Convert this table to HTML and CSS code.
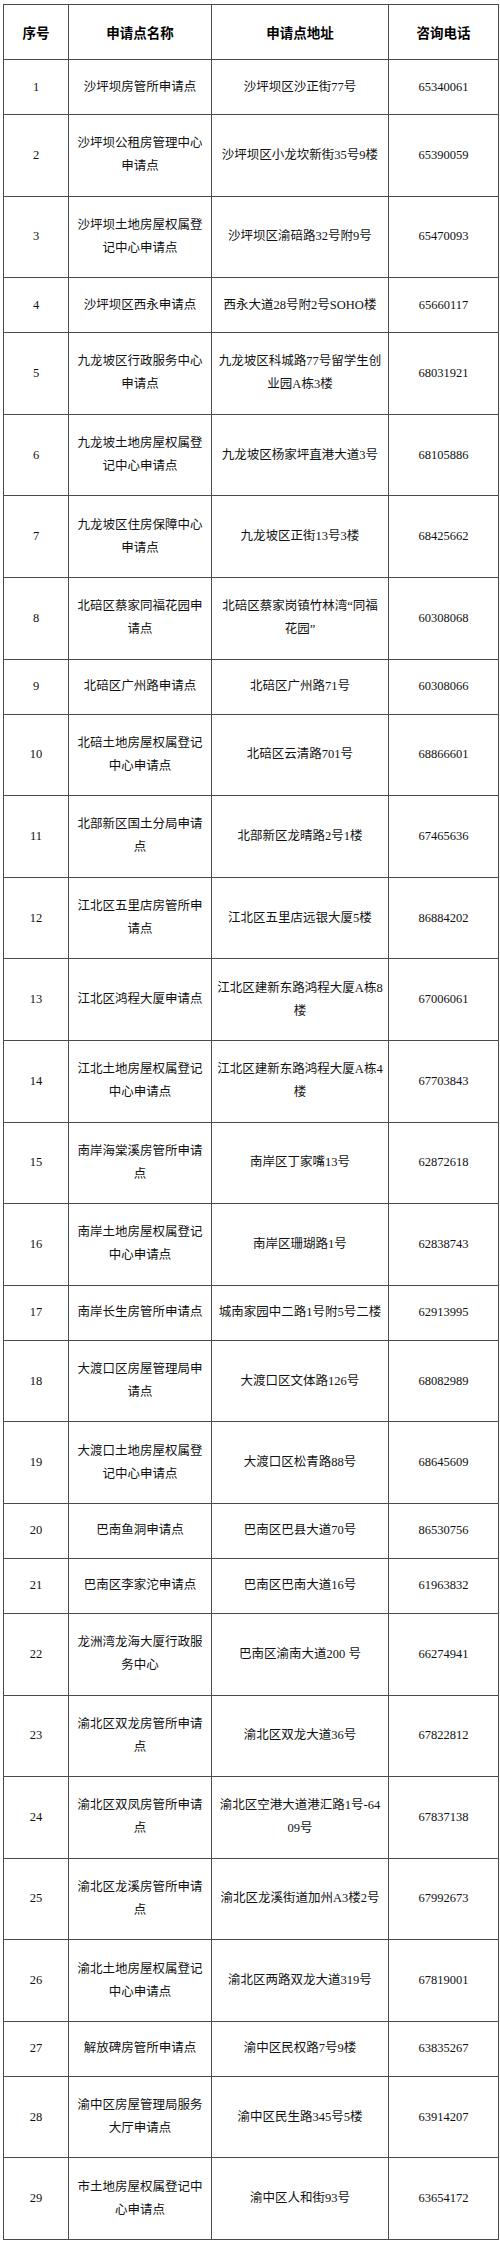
FILE: index.html
```html
<!DOCTYPE html>
<html lang="zh-CN">
<head>
<meta charset="utf-8">
<title>申请点列表</title>
<link rel="stylesheet" href="styles.css">
</head>
<body>
<div class="wrap">
<table class="list">
  <colgroup>
    <col class="c-no">
    <col class="c-name">
    <col class="c-addr">
    <col class="c-tel">
  </colgroup>
  <thead>
    <tr class="one"><th>序号</th><th>申请点名称</th><th>申请点地址</th><th>咨询电话</th></tr>
  </thead>
  <tbody>
    <tr class="one"><td>1</td><td>沙坪坝房管所申请点</td><td>沙坪坝区沙正街77号</td><td>65340061</td></tr>
    <tr class="two"><td>2</td><td>沙坪坝公租房管理中心申请点</td><td>沙坪坝区小龙坎新街35号9楼</td><td>65390059</td></tr>
    <tr class="two"><td>3</td><td>沙坪坝土地房屋权属登记中心申请点</td><td>沙坪坝区渝碚路32号附9号</td><td>65470093</td></tr>
    <tr class="one"><td>4</td><td>沙坪坝区西永申请点</td><td>西永大道28号附2号SOHO楼</td><td>65660117</td></tr>
    <tr class="two"><td>5</td><td>九龙坡区行政服务中心申请点</td><td>九龙坡区科城路77号留学生创业园A栋3楼</td><td>68031921</td></tr>
    <tr class="two"><td>6</td><td>九龙坡土地房屋权属登记中心申请点</td><td>九龙坡区杨家坪直港大道3号</td><td>68105886</td></tr>
    <tr class="two"><td>7</td><td>九龙坡区住房保障中心申请点</td><td>九龙坡区正街13号3楼</td><td>68425662</td></tr>
    <tr class="two"><td>8</td><td>北碚区蔡家同福花园申请点</td><td>北碚区蔡家岗镇竹林湾“同福花园”</td><td>60308068</td></tr>
    <tr class="one"><td>9</td><td>北碚区广州路申请点</td><td>北碚区广州路71号</td><td>60308066</td></tr>
    <tr class="two"><td>10</td><td>北碚土地房屋权属登记中心申请点</td><td>北碚区云清路701号</td><td>68866601</td></tr>
    <tr class="two"><td>11</td><td>北部新区国土分局申请点</td><td>北部新区龙晴路2号1楼</td><td>67465636</td></tr>
    <tr class="two"><td>12</td><td>江北区五里店房管所申请点</td><td>江北区五里店远银大厦5楼</td><td>86884202</td></tr>
    <tr class="two"><td>13</td><td>江北区鸿程大厦申请点</td><td>江北区建新东路鸿程大厦A栋8楼</td><td>67006061</td></tr>
    <tr class="two"><td>14</td><td>江北土地房屋权属登记中心申请点</td><td>江北区建新东路鸿程大厦A栋4楼</td><td>67703843</td></tr>
    <tr class="two"><td>15</td><td>南岸海棠溪房管所申请点</td><td>南岸区丁家嘴13号</td><td>62872618</td></tr>
    <tr class="two"><td>16</td><td>南岸土地房屋权属登记中心申请点</td><td>南岸区珊瑚路1号</td><td>62838743</td></tr>
    <tr class="one"><td>17</td><td>南岸长生房管所申请点</td><td>城南家园中二路1号附5号二楼</td><td>62913995</td></tr>
    <tr class="two"><td>18</td><td>大渡口区房屋管理局申请点</td><td>大渡口区文体路126号</td><td>68082989</td></tr>
    <tr class="two"><td>19</td><td>大渡口土地房屋权属登记中心申请点</td><td>大渡口区松青路88号</td><td>68645609</td></tr>
    <tr class="one"><td>20</td><td>巴南鱼洞申请点</td><td>巴南区巴县大道70号</td><td>86530756</td></tr>
    <tr class="one"><td>21</td><td>巴南区李家沱申请点</td><td>巴南区巴南大道16号</td><td>61963832</td></tr>
    <tr class="two"><td>22</td><td>龙洲湾龙海大厦行政服务中心</td><td>巴南区渝南大道200 号</td><td>66274941</td></tr>
    <tr class="two"><td>23</td><td>渝北区双龙房管所申请点</td><td>渝北区双龙大道36号</td><td>67822812</td></tr>
    <tr class="two"><td>24</td><td>渝北区双凤房管所申请点</td><td>渝北区空港大道港汇路1号-6409号</td><td>67837138</td></tr>
    <tr class="two"><td>25</td><td>渝北区龙溪房管所申请点</td><td>渝北区龙溪街道加州A3楼2号</td><td>67992673</td></tr>
    <tr class="two"><td>26</td><td>渝北土地房屋权属登记中心申请点</td><td>渝北区两路双龙大道319号</td><td>67819001</td></tr>
    <tr class="one"><td>27</td><td>解放碑房管所申请点</td><td>渝中区民权路7号9楼</td><td>63835267</td></tr>
    <tr class="two"><td>28</td><td>渝中区房屋管理局服务大厅申请点</td><td>渝中区民生路345号5楼</td><td>63914207</td></tr>
    <tr class="two"><td>29</td><td>市土地房屋权属登记中心申请点</td><td>渝中区人和街93号</td><td>63654172</td></tr>
  </tbody>
</table>
</div>
</body>
</html>
```

FILE: styles.css
```css
html, body {
  margin: 0;
  padding: 0;
  background: #ffffff;
}

.wrap {
  padding: 4px 2px 6px 3px;
}

.list {
  width: 495px;
  table-layout: fixed;
  border-collapse: collapse;
  font-family: "Liberation Serif", "Noto Sans CJK SC", serif;
  font-size: 12.5px;
  line-height: 23px;
  color: #111111;
  word-break: break-all;
}

.c-no { width: 65px; }
.c-name { width: 143px; }
.c-addr { width: 177px; }
.c-tel { width: 110px; }

.list th,
.list td {
  border: 1px solid #4a4a4a;
  padding: 0 5px;
  text-align: center;
  vertical-align: middle;
}

.list th {
  font-family: "Noto Sans CJK SC", sans-serif;
  font-size: 13.5px;
  font-weight: bold;
  color: #000000;
}

.one { height: 55px; }
.two { height: 81.6px; }
```
